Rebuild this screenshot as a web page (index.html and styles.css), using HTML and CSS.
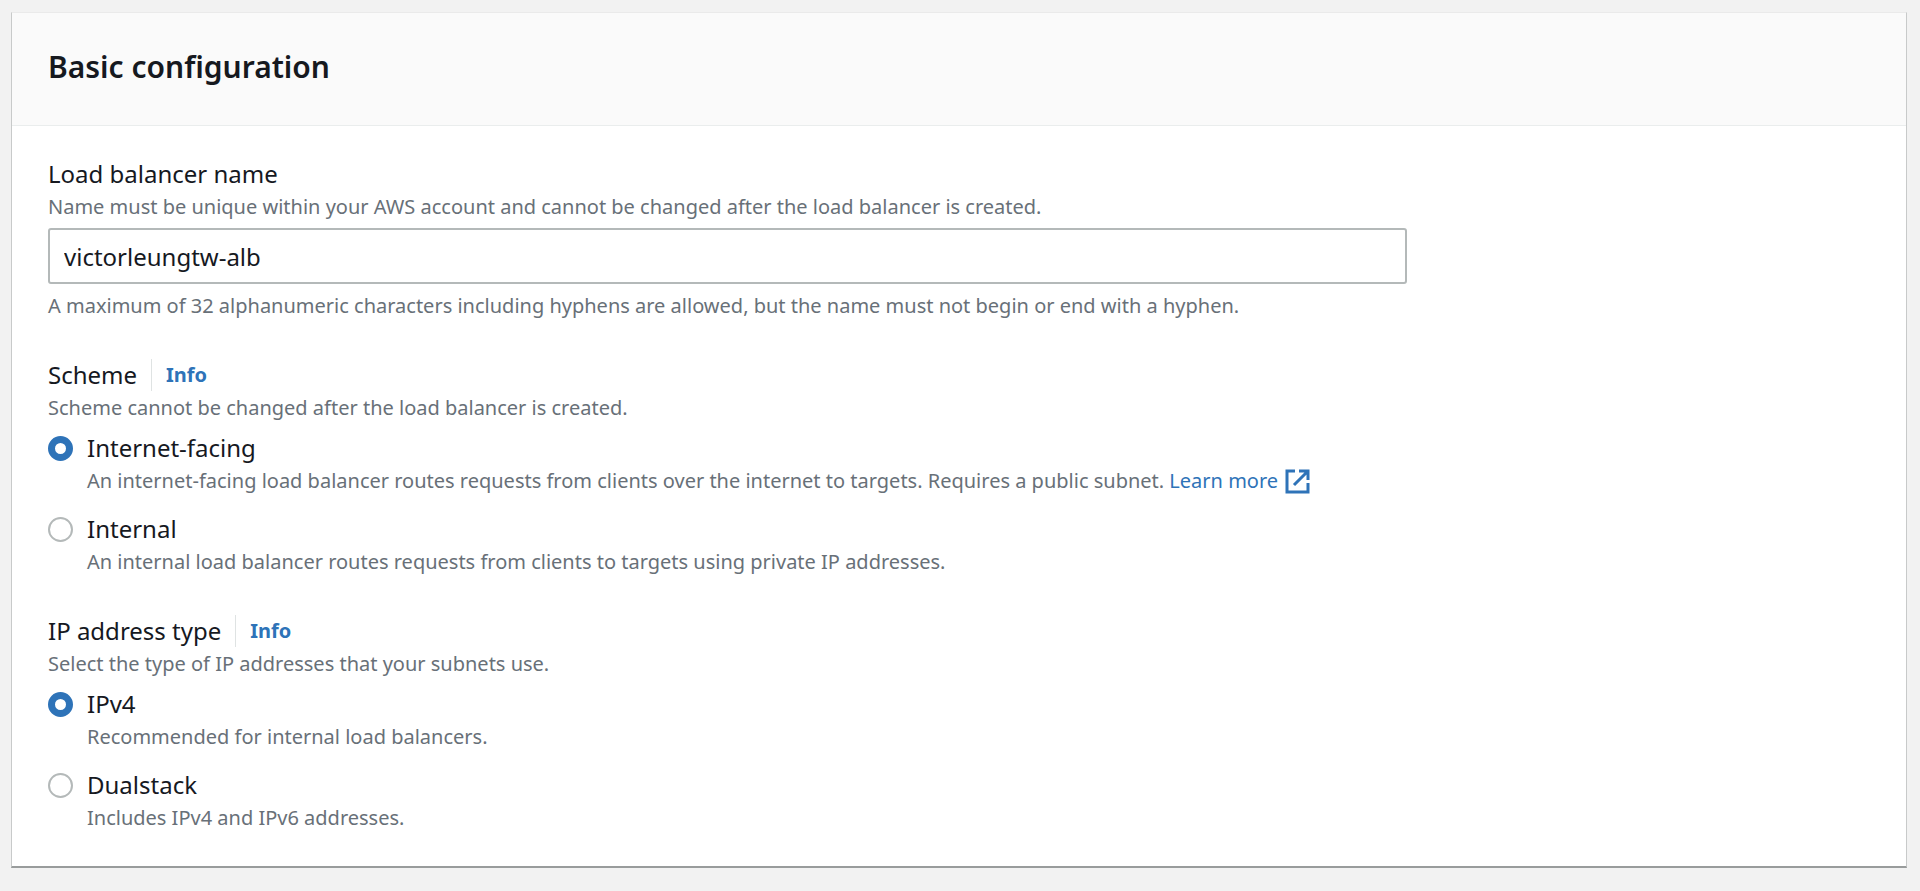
FILE: index.html
```html
<!DOCTYPE html>
<html lang="en">
<head>
    <meta charset="utf-8">
    <title>Basic configuration</title>
    <link rel="stylesheet" href="styles.css">
</head>
<body>
    <section class="container">
        <div class="header">
            <h2>Basic configuration</h2>
        </div>

        <form class="content">
            <div class="field">
                <label class="label" for="lbName">Load balancer name</label>
                <p class="description" id="lbNameDesc">Name must be unique within your AWS account and cannot be changed after the load balancer is created.</p>
                <input class="text-input" type="text" id="lbName" value="victorleungtw-alb" aria-describedby="lbNameDesc lbNameHint">
                <p class="description" id="lbNameHint">A maximum of 32 alphanumeric characters including hyphens are allowed, but the name must not begin or end with a hyphen.</p>
            </div>

            <div class="field" role="radiogroup" aria-labelledby="schemeLabel">
                <div class="label-row">
                    <span class="label" id="schemeLabel">Scheme</span>
                    <a class="info" href="#">Info</a>
                </div>
                <p class="description">Scheme cannot be changed after the load balancer is created.</p>
                <div class="options">
                    <div class="option">
                        <input type="radio" name="scheme" id="internetFacing" checked>
                        <div>
                            <label class="label" for="internetFacing">Internet-facing</label>
                            <p class="description">An internet-facing load balancer routes requests from clients over the internet to targets. Requires a public subnet. <a class="link" href="#">Learn more<svg class="external" viewBox="0 0 25 25" aria-hidden="true"><path d="M10 2H2v21h21v-9M14 2h9v9M22.500 2.500L9 16"/></svg></a></p>
                        </div>
                    </div>
                    <div class="option">
                        <input type="radio" name="scheme" id="internal">
                        <div>
                            <label class="label" for="internal">Internal</label>
                            <p class="description">An internal load balancer routes requests from clients to targets using private IP addresses.</p>
                        </div>
                    </div>
                </div>
            </div>

            <div class="field" role="radiogroup" aria-labelledby="ipLabel">
                <div class="label-row">
                    <span class="label" id="ipLabel">IP address type</span>
                    <a class="info" href="#">Info</a>
                </div>
                <p class="description">Select the type of IP addresses that your subnets use.</p>
                <div class="options">
                    <div class="option">
                        <input type="radio" name="ipType" id="ipv4" checked>
                        <div>
                            <label class="label" for="ipv4">IPv4</label>
                            <p class="description">Recommended for internal load balancers.</p>
                        </div>
                    </div>
                    <div class="option">
                        <input type="radio" name="ipType" id="dualstack">
                        <div>
                            <label class="label" for="dualstack">Dualstack</label>
                            <p class="description">Includes IPv4 and IPv6 addresses.</p>
                        </div>
                    </div>
                </div>
            </div>
        </form>
    </section>
</body>
</html>
```

FILE: styles.css
```css
* {
    box-sizing: border-box;
}
body {
    margin: 0;
    padding: 12px 13px 23px 11px;
    background-color: #f2f2f2;
    color: #16191f;
    font-family: "Noto Sans", "Open Sans", sans-serif;
}
.container {
    background-color: white;
    border: 1px solid #c8caca;
    border-top-color: #eaeaea;
    border-bottom: 2px solid #999c9c;
}
.header {
    padding: 34px 36px 38px;
    background-color: #fafafa;
    border-bottom: 1px solid #eaeded;
}
h2 {
    margin: 0;
    font-size: 30px;
    line-height: 40px;
    font-weight: 600;
}
.content {
    display: flex;
    flex-direction: column;
    gap: 36px;
    padding: 31px 36px 32px;
}
.label {
    display: block;
    font-size: 24px;
    line-height: 34px;
}
.description {
    margin: 0;
    color: #687078;
    font-size: 20px;
    line-height: 32px;
}
.text-input {
    display: block;
    width: calc(75% - 8px);
    height: 56px;
    margin: 5px 0 6px;
    padding: 0 14px;
    border: 2px solid #b4b9b9;
    border-radius: 3px;
    background-color: white;
    color: #16191f;
    font-family: inherit;
    font-size: 24px;
}
.label-row {
    display: flex;
    align-items: center;
}
.info {
    margin-left: 14px;
    padding-left: 14px;
    border-left: 1px solid #dfe3e3;
    color: #2e73b8;
    font-size: 20px;
    line-height: 32px;
    font-weight: 700;
    text-decoration: none;
}
.options {
    display: flex;
    flex-direction: column;
    gap: 15px;
    margin-top: 7px;
}
.option {
    display: flex;
    gap: 14px;
}
.option input {
    appearance: none;
    flex: none;
    width: 25px;
    height: 25px;
    margin: 5px 0 0;
    border: 2px solid #b4b9b9;
    border-radius: 50%;
    background-color: white;
}
.option input:checked {
    border: 7px solid #2e73b8;
}
.link {
    color: #2e73b8;
    text-decoration: none;
}
.external {
    width: 25px;
    height: 25px;
    margin-left: 7px;
    vertical-align: -6px;
    fill: none;
    stroke: #2e73b8;
    stroke-width: 3;
}
```
